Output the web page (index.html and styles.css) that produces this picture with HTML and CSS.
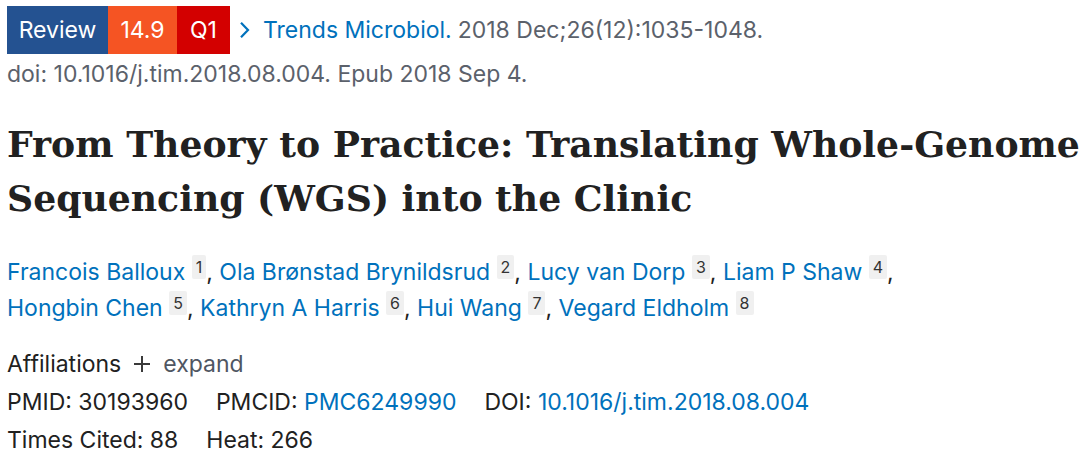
FILE: index.html
```html
<!DOCTYPE html>
<html>
<head>
<meta charset="utf-8">
<link rel="stylesheet" href="styles.css">
</head>
<body>
<div class="page">
  <div class="cit">
    <span class="badges"><span class="b b-review">Review</span><span class="b b-if">14.9</span><span class="b b-q">Q1</span></span>
    <a class="journal"><svg class="chev" width="12" height="18" viewBox="0 0 12 18"><path d="M3 1.8 L10 9 L3 16.2" fill="none" stroke="#0071bc" stroke-width="2.2"/></svg><span>Trends Microbiol.</span></a>
    <span class="cit-rest">2018 Dec;26(12):1035-1048.</span>
  </div>
  <div class="doi-line">doi: 10.1016/j.tim.2018.08.004. Epub 2018 Sep 4.</div>
  <h1 class="title">From Theory to Practice: Translating Whole-Genome<br>Sequencing (WGS) into the Clinic</h1>
  <div class="authors">
    <a>Francois Balloux</a> <sup>1</sup>, <a>Ola Brønstad Brynildsrud</a> <sup>2</sup>, <a>Lucy van Dorp</a> <sup>3</sup>, <a>Liam P Shaw</a> <sup>4</sup>,<br>
    <a>Hongbin Chen</a> <sup>5</sup>, <a>Kathryn A Harris</a> <sup>6</sup>, <a>Hui Wang</a> <sup>7</sup>, <a>Vegard Eldholm</a> <sup>8</sup>
  </div>
  <div class="aff">Affiliations <svg class="plus" width="18" height="18" viewBox="0 0 18 18"><path d="M9 1 V17 M1 9 H17" stroke="#3a3a3a" stroke-width="2"/></svg><span class="expand">expand</span></div>
  <div class="ids"><span>PMID: 30193960</span><span>PMCID: <a>PMC6249990</a></span><span>DOI: <a>10.1016/j.tim.2018.08.004</a></span></div>
  <div class="ids"><span>Times Cited: 88</span><span>Heat: 266</span></div>
</div>
</body>
</html>
```
FILE: styles.css
```css
html, body { margin: 0; padding: 0; background: #fff; }
body { font-family: Inter, "Liberation Sans", Arial, sans-serif; font-size: 23px; color: #212121; }
.page { padding: 6px 0 0 7px; }
a { color: #0071bc; text-decoration: none; }
.cit { color: #5b616b; height: 48px; display: flex; align-items: center; }
.badges { display: flex; height: 48px; margin-right: 8px; }
.b { color: #fff; display: flex; align-items: center; justify-content: center; height: 48px; }
.b-review { background: #245291; width: 101px; }
.b-if { background: #f55423; width: 69px; }
.b-q { background: #d30000; width: 53px; }
.journal { display: inline-flex; align-items: center; margin-right: 6px; }
.chev { margin-right: 13px; }
.doi-line { color: #5b616b; margin-top: 7px; line-height: 26px; }
.title { font-family: "DejaVu Serif", serif; font-weight: bold; font-size: 36.2px; line-height: 54px; color: #212121; margin: 31px 0 0 0; }
.authors { margin-top: 28px; line-height: 36px; }
.authors sup { font-size: 16px; background: #f0f0f0; color: #333; padding: 2px 4px; border-radius: 2px; vertical-align: 7px; line-height: 16px; }
.aff { margin-top: 19px; line-height: 38px; display: flex; align-items: center; }
.plus { margin: 0 12px 0 12px; }
.expand { color: #4f5662; }
.ids { line-height: 38px; display: flex; gap: 28px; }
```
